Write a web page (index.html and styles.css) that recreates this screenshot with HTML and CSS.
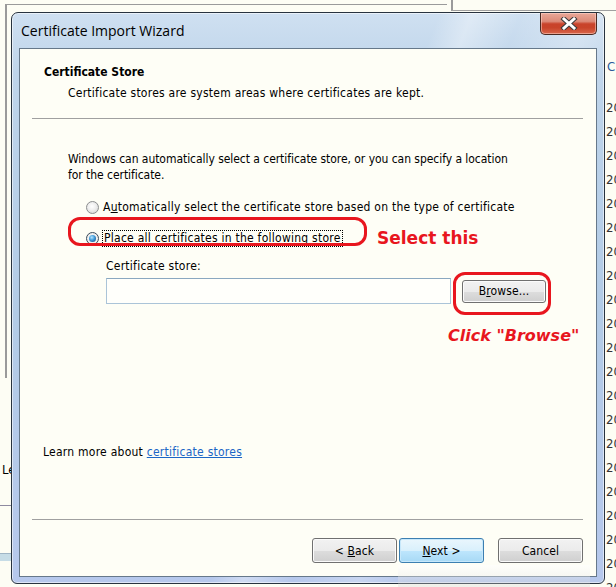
FILE: index.html
```html
<!DOCTYPE html>
<html>
<head>
<meta charset="utf-8">
<title>Certificate Import Wizard</title>
<link rel="stylesheet" href="styles.css">
</head>
<body>
<div class="desktop">
  <div class="bg-win-left"></div>
  <div class="bg-win-top"></div>
  <div class="bg-le">Le</div>
  <div class="bg-line-left"></div>
  <div class="bg-bar-left"></div>
  <div class="bg-right">
    <div class="bg-c">C</div>
    <div class="bg-nums">20<br>20<br>20<br>20<br>20<br>20<br>20<br>20<br>20<br>20<br>20<br>20<br>20<br>20<br>20<br>20<br>20<br>20<br>20<br>20<br>20</div>
  </div>

  <div class="window">
    <div class="titlebar">
      <span class="title">Certificate Import Wizard</span>
      <div class="close">
        <svg width="18" height="13" viewBox="0 0 18 13">
          <path d="M4 2 L14 11 M14 2 L4 11" stroke="#3b3b3b" stroke-width="5" stroke-linecap="square" fill="none"/>
          <path d="M4 2 L14 11 M14 2 L4 11" stroke="#ffffff" stroke-width="3" stroke-linecap="square" fill="none"/>
        </svg>
      </div>
    </div>
    <div class="content">
      <div class="header">
        <div class="h-title">Certificate Store</div>
        <div class="h-sub">Certificate stores are system areas where certificates are kept.</div>
      </div>
      <div class="sep"></div>
      <div class="body">
        <p class="intro">Windows can automatically select a certificate store, or you can specify a location<br>for the certificate.</p>
        <div class="radio-row">
          <span class="radio"></span>
          <span class="radio-label">A<u>u</u>tomatically select the certificate store based on the type of certificate</span>
        </div>
        <div class="radio-row row-selected">
          <span class="radio checked"><span class="dot"></span></span>
          <span class="radio-label focus"><u>P</u>lace all certificates in the following store</span>
          <span class="ring ring-select"></span>
          <span class="annot annot-select">Select this</span>
        </div>
        <div class="store-label">Certificate store:</div>
        <div class="store-row">
          <div class="input"></div>
          <div class="browse-wrap">
            <div class="btn browse"><span>B<u>r</u>owse...</span></div>
            <span class="ring ring-browse"></span>
            <span class="annot annot-browse">Click "Browse"</span>
          </div>
        </div>
        <div class="learn">Learn more about <a class="link">certificate stores</a></div>
      </div>
      <div class="sep"></div>
      <div class="buttons">
        <div class="btn"><span>&lt; <u>B</u>ack</span></div>
        <div class="btn primary"><span><u>N</u>ext &gt;</span></div>
        <div class="btn cancel"><span>Cancel</span></div>
      </div>
    </div>
  </div>
  <div class="ghost"></div>
</div>
</body>
</html>
```

FILE: styles.css
```css
html, body {
  margin: 0;
  padding: 0;
}
body {
  background: #fdfdf4;
  font-family: "DejaVu Sans Condensed", "DejaVu Sans", sans-serif;
  font-size: 12px;
  color: #000;
}
.desktop {
  position: relative;
  width: 616px;
  height: 587px;
  overflow: hidden;
  background: #fdfdf4;
}

/* background windows */
.bg-win-left {
  position: absolute;
  left: 5px;
  top: 4px;
  width: 440px;
  height: 373px;
  border-left: 2px solid #9a9a9a;
  border-top: 1px solid #9a9a9a;
}
.bg-win-top {
  position: absolute;
  left: 451px;
  top: 0;
  width: 168px;
  height: 10px;
  border-left: 2px solid #9a9a9a;
  border-bottom: 1px solid #a0a0a0;
}
.bg-le {
  position: absolute;
  left: 2px;
  top: 462px;
  font-size: 13px;
  line-height: 16px;
}
.bg-line-left {
  position: absolute;
  left: 0;
  top: 505px;
  width: 12px;
  height: 1px;
  background: #8e8aa0;
}
.bg-bar-left {
  position: absolute;
  left: 0;
  top: 553px;
  width: 12px;
  height: 7px;
  background: #c6dce6;
  border-top: 1px solid #9fb5c5;
}
.bg-right {
  position: absolute;
  left: 606px;
  top: 0;
  width: 10px;
  height: 587px;
  overflow: hidden;
  font-size: 13px;
  color: #333;
}
.bg-c {
  position: absolute;
  top: 59px;
  left: 1px;
  color: #2a5a9a;
  line-height: 16px;
}
.bg-nums {
  position: absolute;
  top: 96px;
  left: 0;
  line-height: 24px;
}

/* the dialog window */
.window {
  position: absolute;
  left: 11px;
  top: 12px;
  width: 594px;
  height: 572px;
  box-sizing: border-box;
  border: 1px solid #28333f;
  border-radius: 7px 7px 6px 6px;
  background:
    linear-gradient(112deg, rgba(255,255,255,0) 0%, rgba(255,255,255,0) 52%, rgba(255,255,255,0.35) 56%, rgba(255,255,255,0) 62%, rgba(255,255,255,0.25) 70%, rgba(255,255,255,0) 76%),
    linear-gradient(to bottom, #cfe0f1 0px, #bed4ea 60px, #b2cbe6 300px, #b6c8ec 560px);
  display: flex;
  flex-direction: column;
  padding: 0 7px 6px 7px;
  box-shadow: inset 0 0 0 1px rgba(255,255,255,0.55);
}
.titlebar {
  height: 35px;
  display: flex;
  align-items: flex-start;
  justify-content: space-between;
  flex: none;
}
.title {
  font-family: "Open Sans", "Noto Sans", sans-serif;
  font-size: 14px;
  line-height: 18px;
  margin-top: 9px;
  margin-left: 2px;
  color: #000;
}
.close {
  width: 57px;
  height: 22px;
  box-sizing: border-box;
  border: 1px solid #4a2a22;
  border-top: none;
  border-radius: 0 0 5px 5px;
  background: linear-gradient(to bottom, #e9a898 0%, #dc8a78 40%, #c9432b 52%, #c8442a 70%, #d9674c 100%);
  display: flex;
  align-items: center;
  justify-content: center;
  box-shadow: inset 0 0 0 1px rgba(255,220,210,0.5);
}
.close svg { display: block; }

.content {
  flex: 1;
  background: #fefef6;
  border: 1px solid #66788a;
  display: flex;
  flex-direction: column;
  min-height: 0;
  letter-spacing: 0.25px;
}
.header {
  padding: 15px 0 0 24px;
  line-height: 16px;
}
.h-title {
  font-weight: bold;
  letter-spacing: 0;
}
.h-sub {
  margin: 5px 0 0 24px;
}
.sep {
  height: 1px;
  background: #a0a0a0;
  margin: 17px 13px 0 12px;
  flex: none;
}
.body {
  flex: 1;
  display: flex;
  flex-direction: column;
  line-height: 16px;
}
.intro {
  margin: 32px 0 0 48px;
  letter-spacing: -0.05px;
}
.radio-row {
  display: flex;
  align-items: center;
  margin: 16px 0 0 66px;
  height: 16px;
  position: relative;
}
.row-selected {
  margin-top: 15px;
}
.radio {
  width: 13px;
  height: 13px;
  box-sizing: border-box;
  border-radius: 50%;
  border: 1px solid #8b8d8f;
  background: radial-gradient(circle at 45% 40%, #ffffff 0%, #f0f0f0 40%, #cfd0d0 100%);
  margin-right: 4px;
  display: flex;
  align-items: center;
  justify-content: center;
  flex: none;
}
.radio.checked {
  border-color: #3a4a5a;
  background: radial-gradient(circle, #ffffff 0%, #e4e4e4 100%);
}
.dot {
  width: 7px;
  height: 7px;
  border-radius: 50%;
  background: radial-gradient(circle at 40% 35%, #b8e6ff 0%, #3f9ad8 45%, #103f78 100%);
}
.focus {
  outline: 1px dotted #000;
  outline-offset: 0;
  padding: 0 1px;
  line-height: 15px;
}
.ring {
  position: absolute;
  border: 3px solid #e8161e;
  border-radius: 12px;
  pointer-events: none;
}
.ring-select {
  left: -18px;
  top: -13px;
  width: 293px;
  height: 23px;
}
.annot {
  position: absolute;
  font-family: "DejaVu Sans", sans-serif;
  font-weight: bold;
  font-size: 17px;
  color: #e8161e;
  white-space: nowrap;
  line-height: 20px;
  letter-spacing: 0;
}
.annot-select {
  left: 291px;
  top: -2px;
}
.store-label {
  margin: 12px 0 0 86px;
}
.store-row {
  display: flex;
  align-items: center;
  margin: 4px 0 0 86px;
}
.input {
  width: 345px;
  height: 26px;
  box-sizing: border-box;
  border: 1px solid #abc4d8;
  border-top-color: #8aa8c0;
  background: #fffffb;
}
.browse-wrap {
  position: relative;
  margin-left: 11px;
}
.btn {
  width: 85px;
  height: 25px;
  box-sizing: border-box;
  border: 1px solid #707070;
  border-radius: 3px;
  background: linear-gradient(to bottom, #f2f2f2 0%, #ebebeb 50%, #dddddd 51%, #cfcfcf 100%);
  box-shadow: inset 0 0 0 1px #fbfbfb;
  display: flex;
  align-items: center;
  justify-content: center;
  line-height: 16px;
  letter-spacing: 0.1px;
}
.browse {
  width: 84px;
  height: 23px;
}
.ring-browse {
  left: -9px;
  top: -8px;
  width: 92px;
  height: 37px;
}
.annot-browse {
  left: -14px;
  top: 46px;
  font-size: 16px;
  font-style: italic;
}
.learn {
  margin: auto 0 42px 23px;
}
.link {
  color: #1c66c6;
  text-decoration: underline;
}
.buttons {
  display: flex;
  justify-content: flex-end;
  padding: 18px 13px 13px 0;
}
.primary {
  margin-left: 2px;
  border-color: #3c7fb1;
  background: linear-gradient(to bottom, #eaf6fd 0%, #d9f0fc 50%, #bee6fd 51%, #a7d9f5 100%);
  box-shadow: inset 0 0 0 1px #c7e8fb;
}
.cancel {
  margin-left: 14px;
}
.ghost {
  position: absolute;
  left: 398px;
  top: 565px;
  width: 192px;
  height: 22px;
  background: linear-gradient(to bottom, rgba(255,255,255,0.5), rgba(200,200,200,0.25));
  pointer-events: none;
}
```
